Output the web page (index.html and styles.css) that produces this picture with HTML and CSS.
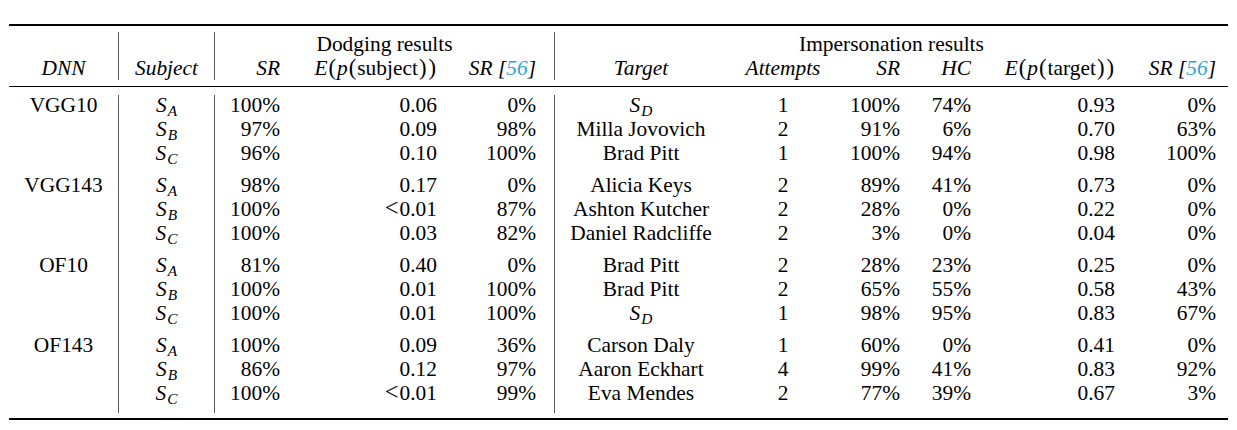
FILE: index.html
```html
<!DOCTYPE html>
<html>
<head>
<meta charset="utf-8">
<title>Dodging and impersonation results</title>
<link rel="stylesheet" href="styles.css">
</head>
<body>
<table class="results">
<colgroup>
<col class="w-dnn"><col class="w-subj"><col class="w-sr"><col class="w-ep"><col class="w-sr56"><col class="w-target"><col class="w-att"><col class="w-isr"><col class="w-hc"><col class="w-ept"><col class="w-isr56">
</colgroup>
<tbody>
<tr class="rule-row"><td colspan="11"><div class="rule rule-top"></div></td></tr>
<tr class="head1">
<td class="vr"></td><td class="vr"></td>
<td colspan="3" class="vr group">Dodging results</td>
<td colspan="6" class="group">Impersonation results</td>
</tr>
<tr class="cols head2">
<td class="it">DNN</td><td class="it">Subject</td><td class="it">SR</td>
<td><span class="mi">E</span><span class="pa">(</span><span class="mi">p</span><span class="pa">(</span>subject<span class="pa">)</span><span class="pa">)</span></td>
<td class="it">SR [<span class="cite">56</span>]</td>
<td class="it">Target</td><td class="it">Attempts</td><td class="it">SR</td><td class="it">HC</td>
<td><span class="mi">E</span><span class="pa">(</span><span class="mi">p</span><span class="pa">(</span>target<span class="pa">)</span><span class="pa">)</span></td>
<td class="it">SR [<span class="cite">56</span>]</td>
</tr>
<tr class="rule-row"><td colspan="11"><div class="rule rule-mid"></div></td></tr>

<tr class="cols body first"><td>VGG10</td><td><span class="s">S<sub>A</sub></span></td><td>100%</td><td>0.06</td><td>0%</td><td><span class="s">S<sub>D</sub></span></td><td>1</td><td>100%</td><td>74%</td><td>0.93</td><td>0%</td></tr>
<tr class="cols body"><td></td><td><span class="s">S<sub>B</sub></span></td><td>97%</td><td>0.09</td><td>98%</td><td>Milla Jovovich</td><td>2</td><td>91%</td><td>6%</td><td>0.70</td><td>63%</td></tr>
<tr class="cols body"><td></td><td><span class="s">S<sub>C</sub></span></td><td>96%</td><td>0.10</td><td>100%</td><td>Brad Pitt</td><td>1</td><td>100%</td><td>94%</td><td>0.98</td><td>100%</td></tr>

<tr class="cols body gstart"><td>VGG143</td><td><span class="s">S<sub>A</sub></span></td><td>98%</td><td>0.17</td><td>0%</td><td>Alicia Keys</td><td>2</td><td>89%</td><td>41%</td><td>0.73</td><td>0%</td></tr>
<tr class="cols body"><td></td><td><span class="s">S<sub>B</sub></span></td><td>100%</td><td><span class="lt">&lt;</span>0.01</td><td>87%</td><td>Ashton Kutcher</td><td>2</td><td>28%</td><td>0%</td><td>0.22</td><td>0%</td></tr>
<tr class="cols body"><td></td><td><span class="s">S<sub>C</sub></span></td><td>100%</td><td>0.03</td><td>82%</td><td>Daniel Radcliffe</td><td>2</td><td>3%</td><td>0%</td><td>0.04</td><td>0%</td></tr>

<tr class="cols body gstart"><td>OF10</td><td><span class="s">S<sub>A</sub></span></td><td>81%</td><td>0.40</td><td>0%</td><td>Brad Pitt</td><td>2</td><td>28%</td><td>23%</td><td>0.25</td><td>0%</td></tr>
<tr class="cols body"><td></td><td><span class="s">S<sub>B</sub></span></td><td>100%</td><td>0.01</td><td>100%</td><td>Brad Pitt</td><td>2</td><td>65%</td><td>55%</td><td>0.58</td><td>43%</td></tr>
<tr class="cols body"><td></td><td><span class="s">S<sub>C</sub></span></td><td>100%</td><td>0.01</td><td>100%</td><td><span class="s">S<sub>D</sub></span></td><td>1</td><td>98%</td><td>95%</td><td>0.83</td><td>67%</td></tr>

<tr class="cols body gstart"><td>OF143</td><td><span class="s">S<sub>A</sub></span></td><td>100%</td><td>0.09</td><td>36%</td><td>Carson Daly</td><td>1</td><td>60%</td><td>0%</td><td>0.41</td><td>0%</td></tr>
<tr class="cols body"><td></td><td><span class="s">S<sub>B</sub></span></td><td>86%</td><td>0.12</td><td>97%</td><td>Aaron Eckhart</td><td>4</td><td>99%</td><td>41%</td><td>0.83</td><td>92%</td></tr>
<tr class="cols body last"><td></td><td><span class="s">S<sub>C</sub></span></td><td>100%</td><td><span class="lt">&lt;</span>0.01</td><td>99%</td><td>Eva Mendes</td><td>2</td><td>77%</td><td>39%</td><td>0.67</td><td>3%</td></tr>

<tr class="rule-row"><td colspan="11"><div class="rule rule-bottom"></div></td></tr>
</tbody>
</table>
</body>
</html>
```
FILE: styles.css
```css
html, body {
  margin: 0;
  padding: 0;
  background: #ffffff;
}

body {
  font-family: "Liberation Serif", "Times New Roman", serif;
  font-size: 21.4px;
  color: #000000;
}

.results {
  margin: 24px 0 0 9px;
  width: 1219px;
  table-layout: fixed;
  border-collapse: separate;
  border-spacing: 0;
}

.results td {
  padding: 0;
  box-sizing: border-box;
  white-space: nowrap;
  line-height: 24px;
  height: 24px;
  vertical-align: top;
}

.w-dnn { width: 110px; }
.w-subj { width: 96px; }
.w-sr { width: 77px; }
.w-ep { width: 157px; }
.w-sr56 { width: 106px; }
.w-target { width: 172px; }
.w-att { width: 112px; }
.w-isr { width: 73px; }
.w-hc { width: 71px; }
.w-ept { width: 144px; }
.w-isr56 { width: 101px; }

/* rules (booktabs style) */
.results .rule-row td {
  height: auto;
  line-height: 0;
  font-size: 0;
}
.rule { background: #000000; }
.rule-top { height: 2px; margin-bottom: 6px; }
.rule-mid { height: 1px; margin-top: 6px; margin-bottom: 8px; }
.rule-bottom { height: 2px; margin-top: 5px; }

/* vertical rules */
.vr,
.cols td:nth-child(1),
.cols td:nth-child(2),
.cols td:nth-child(5) {
  border-right: 1px solid #5a5a5a;
}

.group { text-align: center; }

/* column alignment */
.cols td:nth-child(1),
.cols td:nth-child(2),
.cols td:nth-child(6),
.cols td:nth-child(7) {
  text-align: center;
}
.cols td:nth-child(3),
.cols td:nth-child(4),
.cols td:nth-child(8),
.cols td:nth-child(9),
.cols td:nth-child(10),
.cols td:nth-child(11) {
  text-align: right;
  padding-right: 12px;
}
.cols td:nth-child(5) {
  text-align: right;
  padding-right: 18px;
}

/* body row spacing */
.results .first td {
  line-height: 20px;
  height: 22px;
  padding-bottom: 2px;
}
.results .gstart td {
  height: 32px;
  padding-top: 8px;
}
.results .last td {
  height: 32px;
  padding-bottom: 8px;
}

.it { font-style: italic; }
.mi { font-style: italic; }
.pa {
  padding: 0 1px;
  font-size: 1.06em;
  line-height: 0;
}
.cite { color: #2ea3d6; }

.lt {
  font-size: 1.15em;
  line-height: 0;
  margin-right: 1px;
}

.s {
  font-style: italic;
}
.s sub {
  font-size: 0.72em;
  line-height: 0;
  vertical-align: -0.28em;
  margin-left: 1px;
}
```
